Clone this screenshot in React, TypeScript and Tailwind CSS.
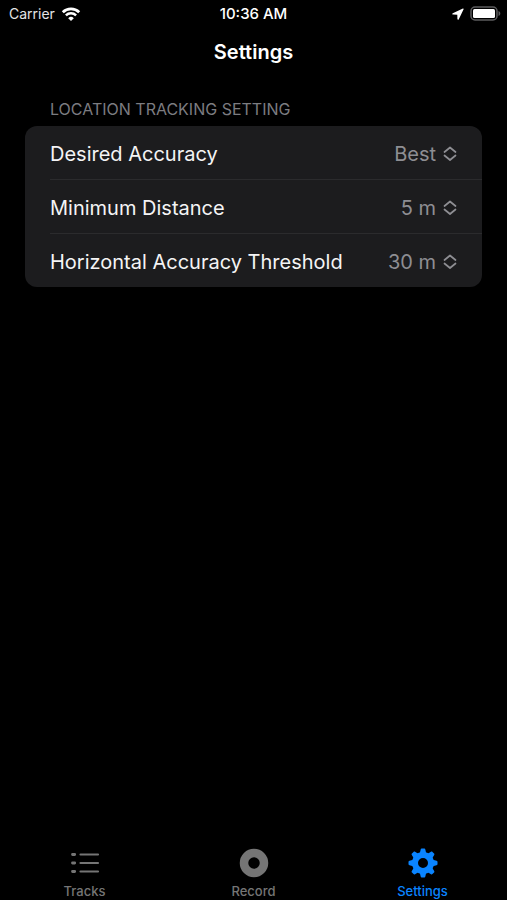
import { useState } from "react";

type SettingItem = {
  id: string;
  label: string;
  initial: string;
  options: readonly string[];
};

const settings: readonly SettingItem[] = [
  {
    id: "desired-accuracy",
    label: "Desired Accuracy",
    initial: "Best",
    options: ["Best", "10 m", "100 m"]
  },
  {
    id: "minimum-distance",
    label: "Minimum Distance",
    initial: "5 m",
    options: ["5 m", "10 m", "20 m"]
  },
  {
    id: "horizontal-threshold",
    label: "Horizontal Accuracy Threshold",
    initial: "30 m",
    options: ["10 m", "30 m", "50 m"]
  }
];

const gearTeeth = [0, 45, 90, 135, 180, 225, 270, 315];

function WifiIcon() {
  return (
    <svg viewBox="0 0 20 14" fill="none" className="h-[14px] w-5" aria-hidden="true">
      <path d="M1.800 5.200a11.800 11.800 0 0 1 16.400 0" stroke="#fff" strokeWidth="2.800" />
      <path d="M4.900 8.400a7.300 7.300 0 0 1 10.200 0" stroke="#fff" strokeWidth="2.500" />
      <path d="M10 13.900 7.200 11.200a4 4 0 0 1 5.600 0z" fill="#fff" />
    </svg>
  );
}

function LocationIcon() {
  return (
    <svg viewBox="0 0 12 12" fill="currentColor" className="h-3 w-3" aria-hidden="true">
      <path d="M10.900.6.8 5.200c-.7.3-.6 1.300.2 1.400l4.300.2.1 4.300c0 .8 1.100 1 1.400.2L11.600 1.300c.2-.5-.2-.9-.7-.7z" />
    </svg>
  );
}

function BatteryIcon() {
  return (
    <svg viewBox="0 0 31 15" className="h-[15px] w-[31px]" aria-hidden="true">
      <rect x="1" y="1" width="26" height="13" rx="4" fill="none" stroke="#5c5c5e" strokeWidth="1.500" />
      <rect x="3" y="3" width="22" height="9" rx="1.500" fill="#fff" />
      <path d="M28.500 5v5c1.200-.5 1.800-1.400 1.800-2.500S29.700 5.500 28.500 5z" fill="#5c5c5e" />
    </svg>
  );
}

function UpDownIcon() {
  return (
    <svg
      viewBox="0 0 14 16"
      fill="none"
      stroke="currentColor"
      strokeWidth="1.700"
      strokeLinecap="round"
      strokeLinejoin="round"
      className="pointer-events-none absolute top-1/2 right-0 h-4 w-[14px] -translate-y-1/2"
      aria-hidden="true"
    >
      <path d="m1.500 6 5.500-4.500L12.500 6" />
      <path d="M1.500 9.500 7 14l5.500-4.500" />
    </svg>
  );
}

function TracksIcon() {
  return (
    <svg
      viewBox="0 0 30 30"
      stroke="currentColor"
      strokeLinecap="round"
      className="h-[30px] w-[30px]"
      aria-hidden="true"
    >
      <path d="M2.500 6.500h2.200M2.500 15h2.200M2.500 23.500h2.200" strokeWidth="2.800" />
      <path d="M10.500 6.500H28M10.500 15H28M10.500 23.500H28" strokeWidth="2.200" />
    </svg>
  );
}

function RecordIcon() {
  return (
    <svg viewBox="0 0 30 30" fill="none" className="h-[30px] w-[30px]" aria-hidden="true">
      <circle cx="15" cy="15" r="10" stroke="currentColor" strokeWidth="8.500" />
    </svg>
  );
}

function GearIcon() {
  return (
    <svg viewBox="0 0 30 30" className="h-[30px] w-[30px]" aria-hidden="true">
      <circle cx="15" cy="15" r="8" fill="none" stroke="currentColor" strokeWidth="6" />
      {gearTeeth.map((angle) => (
        <path
          key={angle}
          d="M11.600 6 12.700 1.500c.2-.7.5-1 1.200-1h2.200c.7 0 1 .3 1.200 1L18.400 6z"
          fill="currentColor"
          transform={`rotate(${angle} 15 15)`}
        />
      ))}
    </svg>
  );
}

function SettingRow({ item }: { item: SettingItem }) {
  const [value, setValue] = useState(item.initial);

  return (
    <div className="ml-[25px] flex h-[54px] items-center justify-between border-b border-[#2b2b2d] pt-[3px] pr-[25px] last:h-[53px] last:border-b-0">
      <label htmlFor={item.id} className="text-[20px] text-[#f4f4f5]">
        {item.label}
      </label>
      <div className="relative text-[#8e8e93]">
        <select
          id={item.id}
          value={value}
          onChange={(event) => setValue(event.target.value)}
          className="appearance-none bg-transparent pr-[21px] text-right text-[20px] [field-sizing:content]"
        >
          {item.options.map((option) => (
            <option key={option}>{option}</option>
          ))}
        </select>
        <UpDownIcon />
      </div>
    </div>
  );
}

const tabs = [
  { label: "Tracks", Icon: TracksIcon },
  { label: "Record", Icon: RecordIcon },
  { label: "Settings", Icon: GearIcon }
];

export default function App() {
  const [activeTab, setActiveTab] = useState("Settings");

  return (
    <div className="flex min-h-screen flex-col bg-black font-['Inter',sans-serif] text-white">
      <div className="grid h-[27px] grid-cols-3 items-center px-[6px] text-[14px] leading-5">
        <div className="flex items-center gap-[6px] pl-[3px] text-[#e4e4e6]">
          Carrier
          <WifiIcon />
        </div>
        <div className="text-center text-[15px] leading-5 font-medium">10:36 AM</div>
        <div className="flex items-center justify-end gap-[6px]">
          <LocationIcon />
          <BatteryIcon />
        </div>
      </div>

      <header className="flex h-[50px] items-center justify-center">
        <h1 className="text-[20px] font-semibold">Settings</h1>
      </header>

      <main className="flex-1 px-[25px] pt-[23px]">
        <h2 className="mb-2 pl-[25px] text-[16px] leading-[18px] text-[#7c7c80]">
          LOCATION TRACKING SETTING
        </h2>
        <section className="overflow-hidden rounded-xl bg-[#1c1c1e]">
          {settings.map((item) => (
            <SettingRow key={item.id} item={item} />
          ))}
        </section>
      </main>

      <nav className="grid grid-cols-3 pb-px">
        {tabs.map(({ label, Icon }) => (
          <button
            key={label}
            type="button"
            onClick={() => setActiveTab(label)}
            aria-current={activeTab === label ? "page" : undefined}
            className={`flex flex-col items-center gap-[5px] text-[13px] leading-4 font-medium ${
              activeTab === label ? "text-[#0a84ff]" : "text-[#757575]"
            }`}
          >
            <Icon />
            {label}
          </button>
        ))}
      </nav>
    </div>
  );
}
